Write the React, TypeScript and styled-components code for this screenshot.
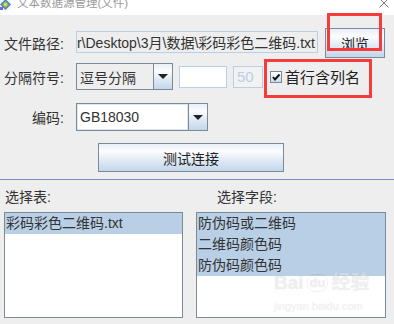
import React from 'react';
import styled, { createGlobalStyle } from 'styled-components';

const GlobalStyle = createGlobalStyle`
  html, body {
    margin: 0;
    padding: 0;
    background: #eeeeee;
  }
`;

const FONT = `"Liberation Sans", "Noto Sans CJK SC", sans-serif`;
const BUTTON_GRADIENT = `linear-gradient(180deg, #e9eff8 0%, #fbfcfe 28%, #dfe9f4 62%, #c3d6ea 100%)`;

export default function App() {
  return (
    <>
      <GlobalStyle />
      <Window>
        <TitleBar>
          <AppIcon />
          <TitleText>文本数据源管理(文件)</TitleText>
          <CloseIcon />
        </TitleBar>

        <Row $top={13} $height={30}>
          <Label>文件路径:</Label>
          <PathField>
            <span>r\Desktop\3月\数据\彩码彩色二维码.txt</span>
          </PathField>
          <Button $width={60} $height={30}>浏览</Button>
        </Row>

        <Row $top={5} $height={27}>
          <Label>分隔符号:</Label>
          <Combo>
            <ComboBody $width={77}>逗号分隔</ComboBody>
            <ArrowButton />
          </Combo>
          <TextBox $width={48} $left={6} />
          <TextBox $width={30} $left={6} $disabled>50</TextBox>
          <CheckLabel>
            <CheckBox checked />
            首行含列名
          </CheckLabel>
        </Row>

        <Row $top={13} $height={28}>
          <Label>编码:</Label>
          <Combo>
            <ComboBody $width={112} $editable>GB18030</ComboBody>
            <ArrowButton />
          </Combo>
        </Row>

        <ButtonRow>
          <Button $width={186} $height={29}>测试连接</Button>
        </ButtonRow>

        <Separator />

        <ListArea>
          <ListLabel>选择表:</ListLabel>
          <ListLabel $indent={21}>选择字段:</ListLabel>
          <List>
            <ListItem $selected>彩码彩色二维码.txt</ListItem>
          </List>
          <List>
            <ListItem $selected>防伪码或二维码</ListItem>
            <ListItem $selected>二维码颜色码</ListItem>
            <ListItem $selected>防伪码颜色码</ListItem>
          </List>
        </ListArea>

        <Watermark>
          <WatermarkLogo>
            Bai<Paw>du</Paw>经验
          </WatermarkLogo>
          <WatermarkUrl>jingyan.baidu.com</WatermarkUrl>
        </Watermark>

        <Highlight $left={327} $top={13} $width={55} $height={38} />
        <Highlight $left={264} $top={59} $width={108} $height={39} />
      </Window>
    </>
  );
}

const AppIcon = () => (
  <IconSvg width="11" height="11" viewBox="0 0 11 11">
    <rect x="0" y="0" width="11" height="11" fill="#f4f7fb" />
    <path d="M5.5 0 L11 5.5 L5.5 11 L0 5.5 Z" fill="#4a7fd6" />
    <path d="M5.5 2 L9 5.5 L5.5 9 L2 5.5 Z" fill="#7fc64a" />
    <rect x="4" y="4" width="3" height="3" fill="#f0d040" />
    <rect x="0" y="8" width="3" height="3" fill="#8a5fc8" />
  </IconSvg>
);

const CloseIcon = () => (
  <CloseSvg width="10" height="10" viewBox="0 0 10 10">
    <path d="M0.5 0.5 L9.5 9.5 M9.5 0.5 L0.5 9.5" stroke="#777" strokeWidth="1" />
  </CloseSvg>
);

const ArrowButton = () => (
  <ArrowBox>
    <svg width="10" height="5" viewBox="0 0 10 5">
      <path d="M0 0 H10 L5 5 Z" fill="#222" />
    </svg>
  </ArrowBox>
);

const CheckBox = ({ checked }: { checked: boolean }) => (
  <CheckSquare>
    {checked && (
      <svg width="10" height="10" viewBox="0 0 10 10">
        <path d="M2 5 L4 7.5 L8.5 2.5" stroke="#111" strokeWidth="2" fill="none" />
      </svg>
    )}
  </CheckSquare>
);

const Window = styled.div`
  position: relative;
  width: 394px;
  height: 324px;
  background: #eeeeee;
  overflow: hidden;
  font-family: ${FONT};
  font-size: 14px;
  color: #333333;
`;

const TitleBar = styled.div`
  height: 15px;
  background: #ffffff;
  display: flex;
  align-items: flex-start;
  overflow: hidden;
`;

const IconSvg = styled.svg`
  flex-shrink: 0;
  margin-top: -1px;
`;

const TitleText = styled.div`
  margin-left: 6px;
  margin-top: -3px;
  font-size: 11.5px;
  line-height: 13px;
  color: #9a9a9a;
  white-space: nowrap;
`;

const CloseSvg = styled.svg`
  margin-left: auto;
  margin-right: 5px;
  margin-top: -2px;
`;

const Row = styled.div<{ $top: number; $height: number }>`
  display: flex;
  align-items: center;
  margin-top: ${(p) => p.$top}px;
  height: ${(p) => p.$height}px;
`;

const Label = styled.div`
  width: 64px;
  margin-right: 12px;
  text-align: right;
  white-space: nowrap;
`;

const PathField = styled.div`
  box-sizing: border-box;
  width: 242px;
  height: 22px;
  margin-right: 7px;
  margin-top: -2px;
  border: 1px solid #b8cfe5;
  background: #eeeeee;
  display: flex;
  align-items: center;
  justify-content: flex-end;
  padding: 0 2px;
  overflow: hidden;
  white-space: nowrap;
  flex-shrink: 0;
`;

const Button = styled.div<{ $width: number; $height: number }>`
  box-sizing: border-box;
  width: ${(p) => p.$width}px;
  height: ${(p) => p.$height}px;
  border: 1px solid #7a8a99;
  background: ${BUTTON_GRADIENT};
  display: flex;
  align-items: center;
  justify-content: center;
  font-size: 14px;
  color: #222;
  flex-shrink: 0;
`;

const Combo = styled.div`
  display: flex;
  height: 100%;
`;

const ComboBody = styled.div<{ $width: number; $editable?: boolean }>`
  box-sizing: border-box;
  width: ${(p) => p.$width}px;
  height: 100%;
  border: 1px solid #7a8a99;
  border-right: none;
  background: ${(p) => (p.$editable ? '#ffffff' : '#eeeeee')};
  box-shadow: ${(p) => (p.$editable ? 'inset 0 0 0 1px #dfe8f1' : 'none')};
  display: flex;
  align-items: center;
  padding-left: 3px;
  white-space: nowrap;
`;

const ArrowBox = styled.div`
  box-sizing: border-box;
  width: 20px;
  height: 100%;
  border: 1px solid #7a8a99;
  background: ${BUTTON_GRADIENT};
  display: flex;
  align-items: center;
  justify-content: center;
`;

const TextBox = styled.div<{ $width: number; $left: number; $disabled?: boolean }>`
  box-sizing: border-box;
  width: ${(p) => p.$width}px;
  height: 22px;
  margin-left: ${(p) => p.$left}px;
  border: 1px solid #b8cfe5;
  background: ${(p) => (p.$disabled ? '#f2f2f2' : '#ffffff')};
  color: #b8cfe5;
  display: flex;
  align-items: center;
  padding-left: 3px;
  font-size: 15px;
`;

const CheckLabel = styled.div`
  display: flex;
  align-items: center;
  margin-left: 7px;
  font-size: 15px;
  color: #222;
  white-space: nowrap;
`;

const CheckSquare = styled.div`
  box-sizing: border-box;
  width: 12px;
  height: 12px;
  margin-right: 3px;
  border: 1px solid #7a8a99;
  background: linear-gradient(180deg, #ffffff 0%, #c9daec 100%);
  display: flex;
  align-items: center;
  justify-content: center;
`;

const ButtonRow = styled.div`
  display: flex;
  margin-top: 12px;
  padding-left: 98px;
`;

const Separator = styled.div`
  margin-top: 7px;
  height: 1px;
  background: #7b91b9;
`;

const ListArea = styled.div`
  display: grid;
  grid-template-columns: 179px 190px;
  grid-template-rows: 32px 106px;
  column-gap: 13px;
  padding-left: 4px;
`;

const ListLabel = styled.div<{ $indent?: number }>`
  display: flex;
  align-items: center;
  padding-left: ${(p) => (p.$indent ?? 1)}px;
  padding-bottom: 1px;
  white-space: nowrap;
`;

const List = styled.div`
  box-sizing: border-box;
  border: 1px solid #7a8a99;
  background: #ffffff;
  display: flex;
  flex-direction: column;
`;

const ListItem = styled.div<{ $selected?: boolean }>`
  height: 21px;
  line-height: 21px;
  padding-left: 1px;
  background: ${(p) => (p.$selected ? '#b8cfe5' : 'transparent')};
  white-space: nowrap;
`;

const Watermark = styled.div`
  position: absolute;
  left: 274px;
  top: 268px;
  display: flex;
  flex-direction: column;
  align-items: flex-start;
  pointer-events: none;
`;

const WatermarkLogo = styled.div`
  display: flex;
  align-items: flex-end;
  font-family: "Liberation Sans", "Noto Sans CJK SC", sans-serif;
  font-weight: bold;
  font-size: 19px;
  line-height: 30px;
  color: rgba(255, 255, 255, 0.5);
  text-shadow: 0 0 1px rgba(0, 0, 0, 0.14);
`;

const Paw = styled.span`
  margin: 0 3px;
  padding: 0 2px;
  border-radius: 8px;
  font-size: 13px;
  line-height: 16px;
  margin-bottom: 6px;
  border: 1px solid rgba(0, 0, 0, 0.06);
`;

const WatermarkUrl = styled.div`
  font-size: 11px;
  line-height: 12px;
  margin-top: 2px;
  color: rgba(255, 255, 255, 0.6);
  text-shadow: 0 0 1px rgba(0, 0, 0, 0.14);
`;

const Highlight = styled.div<{ $left: number; $top: number; $width: number; $height: number }>`
  position: absolute;
  box-sizing: border-box;
  left: ${(p) => p.$left}px;
  top: ${(p) => p.$top}px;
  width: ${(p) => p.$width}px;
  height: ${(p) => p.$height}px;
  border: 3px solid #f53b3b;
  pointer-events: none;
`;
